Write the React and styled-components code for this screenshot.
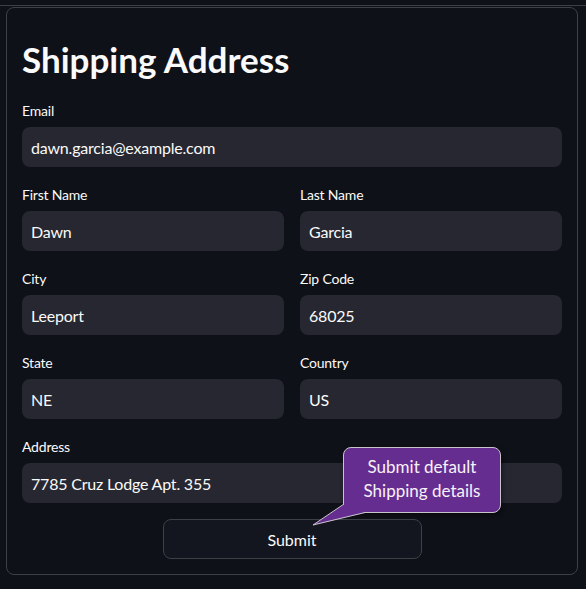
import React from "react";
import styled, { createGlobalStyle } from "styled-components";

const Global = createGlobalStyle`
  html, body { margin: 0; padding: 0; background: #0e1117; }
  body { font-family: Lato, "Noto Sans", sans-serif; color: #fafafa; }
  * { box-sizing: border-box; }
`;

const Page = styled.div`
  padding-top: 5px;
  width: 586px;
  height: 589px;
  overflow: hidden;
`;

const TopRule = styled.div`
  height: 1px;
  background: #3d4047;
  margin-bottom: 1px;
`;

const Form = styled.form`
  margin: 0 8px 0 6px;
  border: 1px solid #3d4047;
  border-radius: 8px;
  padding: 15px;
  display: flex;
  flex-direction: column;
  gap: 16px;
`;

const Title = styled.h2`
  margin: 0;
  padding-top: 12px;
  height: 60px;
  line-height: 48px;
  font-size: 35px;
  font-weight: 700;
  color: #fafafa;
`;

const Row = styled.div`
  display: grid;
  grid-template-columns: 1fr 1fr;
  gap: 16px;
`;

const Field = styled.div`
  display: flex;
  flex-direction: column;
`;

const Label = styled.label`
  height: 24px;
  line-height: 24px;
  margin-bottom: 4px;
  font-size: 14px;
  letter-spacing: -0.2px;
  color: #fafafa;
`;

const Input = styled.input`
  height: 40px;
  width: 100%;
  border: none;
  outline: none;
  border-radius: 8px;
  background: #262730;
  color: #fafafa;
  padding: 0 9px;
  font-family: inherit;
  font-size: 16px;
  letter-spacing: -0.2px;
`;

const ButtonRow = styled.div`
  position: relative;
  display: flex;
  justify-content: center;
`;

const Button = styled.button`
  width: 259px;
  height: 40px;
  background: #13161e;
  border: 1px solid #3d4047;
  border-radius: 8px;
  color: #fafafa;
  font-family: inherit;
  font-size: 16px;
`;

const Tooltip = styled.div`
  position: absolute;
  left: 321px;
  top: -72px;
  width: 158px;
  height: 66px;
  background: #662d91;
  border: 1px solid #c9c4cc;
  border-radius: 8px;
  box-shadow: 1px 2px 4px rgba(0, 0, 0, 0.5);
  padding: 7px 2px;
  text-align: center;
  font-size: 17px;
  line-height: 24px;
  color: #f6f2f8;
`;

const Tail = styled.svg`
  position: absolute;
  left: 289px;
  top: -16px;
  overflow: visible;
`;

function Labeled({ label, value }) {
  return (
    <Field>
      <Label>{label}</Label>
      <Input defaultValue={value} />
    </Field>
  );
}

export default function App() {
  return (
    <Page>
      <Global />
      <TopRule />
      <Form onSubmit={(e) => e.preventDefault()}>
        <Title>Shipping Address</Title>
        <Labeled label="Email" value="dawn.garcia@example.com" />
        <Row>
          <Labeled label="First Name" value="Dawn" />
          <Labeled label="Last Name" value="Garcia" />
        </Row>
        <Row>
          <Labeled label="City" value="Leeport" />
          <Labeled label="Zip Code" value="68025" />
        </Row>
        <Row>
          <Labeled label="State" value="NE" />
          <Labeled label="Country" value="US" />
        </Row>
        <Labeled label="Address" value="7785 Cruz Lodge Apt. 355" />
        <ButtonRow>
          <Button type="button">Submit</Button>
          <Tooltip>
            Submit default
            <br />
            Shipping details
          </Tooltip>
          <Tail width="56" height="24" viewBox="0 0 56 24">
            <polygon points="33,1 54,10 2,22" fill="#662d91" />
            <polyline points="33,1 2,22 54,9.5" fill="none" stroke="#c9c4cc" strokeWidth="1" />
          </Tail>
        </ButtonRow>
      </Form>
    </Page>
  );
}
